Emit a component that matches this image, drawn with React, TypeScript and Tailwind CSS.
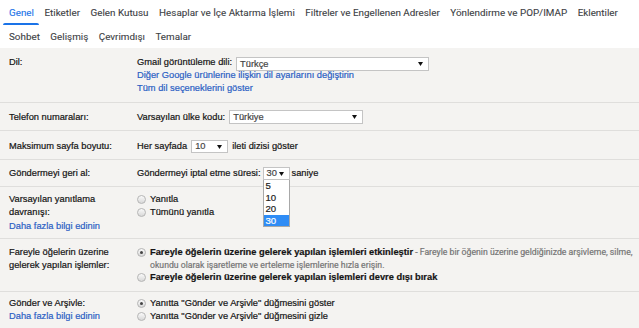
import React from "react";

const tabsTop = [
  "Genel",
  "Etiketler",
  "Gelen Kutusu",
  "Hesaplar ve İçe Aktarma İşlemi",
  "Filtreler ve Engellenen Adresler",
  "Yönlendirme ve POP/IMAP",
  "Eklentiler",
];
const tabsBottom = ["Sohbet", "Gelişmiş", "Çevrimdışı", "Temalar"];

function Arrow() {
  return (
    <svg width="5" height="4" viewBox="0 0 5 4" className="shrink-0">
      <path d="M0 0h5L2.5 4z" fill="#111" />
    </svg>
  );
}

function Select({ value, size }: { value: string; size: string }) {
  return (
    <div
      className={`flex shrink-0 items-center justify-between border border-[#c4c4c4] bg-white pl-[3px] pr-[5px] text-[#444] ${size}`}
    >
      <span>{value}</span>
      <Arrow />
    </div>
  );
}

function Radio({ checked }: { checked?: boolean }) {
  return (
    <span className="flex h-[9px] w-[9px] shrink-0 items-center justify-center rounded-full border border-[#b5b5b5] bg-gradient-to-b from-[#fafafa] to-[#d8d8d8] [-webkit-text-stroke:0px]">
      {checked && <span className="h-[3px] w-[3px] rounded-full bg-[#444]" />}
    </span>
  );
}

const row = "grid grid-cols-[128px_1fr] border-b border-[#dfdedc] pl-[9px]";
const link = "text-[#2b5fc4]";

export default function App() {
  return (
    <div className="h-[328px] w-[639px] overflow-hidden bg-[#f4f3f1] font-['Liberation_Sans',Arial,sans-serif] text-[9.3px] leading-[13px] text-[#141414] [-webkit-text-stroke:0.2px]">
      {/* Tabs */}
      <div className="h-[48px] bg-white font-['Roboto',sans-serif] text-[9.85px] text-[#3c4043] [-webkit-text-stroke:0.1px]">
        <div className="flex h-[25px] gap-[10.5px] pl-[9px]">
          {tabsTop.map((t, i) => (
            <div key={t} className={`relative flex h-full items-center whitespace-nowrap ${i === 0 ? "text-[#1a73e8]" : ""}`}>
              {t}
              {i === 0 && (
                <span className="absolute bottom-[0.5px] left-[-6px] right-[-5px] h-[2px] rounded-t-[2px] bg-[#1a73e8]" />
              )}
            </div>
          ))}
        </div>
        <div className="flex h-[23px] items-center gap-[10.5px] pl-[9px]">
          {tabsBottom.map((t) => (
            <span key={t} className="whitespace-nowrap">
              {t}
            </span>
          ))}
        </div>
      </div>

      {/* Dil */}
      <div className={`${row} pt-[8px] pb-[7px]`}>
        <div>Dil:</div>
        <div>
          <div className="flex h-[13px] items-center gap-[4px]">
            <span>Gmail görüntüleme dili:</span>
            <div className="mt-[3px]">
              <Select value="Türkçe" size="w-[193px] h-[14px]" />
            </div>
          </div>
          <div className={link}>Diğer Google ürünlerine ilişkin dil ayarlarını değiştirin</div>
          <div className={link}>Tüm dil seçeneklerini göster</div>
        </div>
      </div>

      {/* Telefon */}
      <div className={`${row} pt-[7px] pb-[6px]`}>
        <div className="flex h-[14px] items-center">Telefon numaraları:</div>
        <div className="flex h-[14px] items-center gap-[4px]">
          <span>Varsayılan ülke kodu:</span>
          <Select value="Türkiye" size="w-[134px] h-[14px]" />
        </div>
      </div>

      {/* Maksimum */}
      <div className={`${row} pt-[9px] pb-[6px]`}>
        <div className="flex h-[13px] items-center">Maksimum sayfa boyutu:</div>
        <div className="flex h-[13px] items-center gap-[4px]">
          <span>Her sayfada</span>
          <Select value="10" size="w-[37px] h-[13px]" />
          <span>ileti dizisi göster</span>
        </div>
      </div>

      {/* Göndermeyi geri al */}
      <div className={`${row} pt-[7px] pb-[6px]`}>
        <div className="flex h-[13px] items-center">Göndermeyi geri al:</div>
        <div className="flex h-[13px] items-center gap-[2px]">
          <span>Göndermeyi iptal etme süresi:</span>
          <div className="relative">
            <Select value="30" size="w-[27px] h-[13px]" />
            <div className="absolute left-0 top-full z-10 w-[27px] border border-t-0 border-[#a8a8a8] bg-white text-[9.6px] leading-[11.5px] text-[#222]">
              {["5", "10", "20", "30"].map((v) => (
                <div key={v} className={`h-[11.5px] pl-[2px] ${v === "30" ? "bg-[#2f8cf5] text-white" : ""}`}>
                  {v}
                </div>
              ))}
            </div>
          </div>
          <span>saniye</span>
        </div>
      </div>

      {/* Varsayılan yanıtlama */}
      <div className={`${row} pt-[6px] pb-[5px] leading-[13.3px]`}>
        <div>
          <div>Varsayılan yanıtlama</div>
          <div>davranışı:</div>
          <div className={link}>Daha fazla bilgi edinin</div>
        </div>
        <div>
          <div className="flex h-[13px] items-center gap-[4px]">
            <Radio />
            <span>Yanıtla</span>
          </div>
          <div className="flex h-[13px] items-center gap-[4px]">
            <Radio />
            <span>Tümünü yanıtla</span>
          </div>
        </div>
      </div>

      {/* Fareyle */}
      <div className={`${row} pt-[7px] pb-[7px] leading-[12.7px]`}>
        <div>
          <div>Fareyle öğelerin üzerine</div>
          <div>gelerek yapılan işlemler:</div>
        </div>
        <div>
          <div className="flex gap-[4px]">
            <div className="flex h-[12.7px] items-center">
              <Radio checked />
            </div>
            <div>
              <div className="whitespace-nowrap">
                <span className="font-bold">Fareyle öğelerin üzerine gelerek yapılan işlemleri etkinleştir</span>
                <span className="font-['Roboto',sans-serif] text-[8.7px] text-[#777]"> - Fareyle bir öğenin üzerine geldiğinizde arşivleme, silme,</span>
              </div>
              <div className="font-['Roboto',sans-serif] text-[8.7px] text-[#777]">
                okundu olarak işaretleme ve erteleme işlemlerine hızla erişin.
              </div>
            </div>
          </div>
          <div className="flex h-[12.7px] items-center gap-[4px]">
            <Radio />
            <span className="font-bold">Fareyle öğelerin üzerine gelerek yapılan işlemleri devre dışı bırak</span>
          </div>
        </div>
      </div>

      {/* Gönder ve Arşivle */}
      <div className="grid grid-cols-[128px_1fr] pl-[9px] pt-[5px] leading-[13.3px]">
        <div>
          <div>Gönder ve Arşivle:</div>
          <div className={link}>Daha fazla bilgi edinin</div>
        </div>
        <div>
          <div className="flex h-[13.3px] items-center gap-[4px]">
            <Radio checked />
            <span>Yanıtta "Gönder ve Arşivle" düğmesini göster</span>
          </div>
          <div className="flex h-[13.3px] items-center gap-[4px]">
            <Radio />
            <span>Yanıtta "Gönder ve Arşivle" düğmesini gizle</span>
          </div>
        </div>
      </div>
    </div>
  );
}
